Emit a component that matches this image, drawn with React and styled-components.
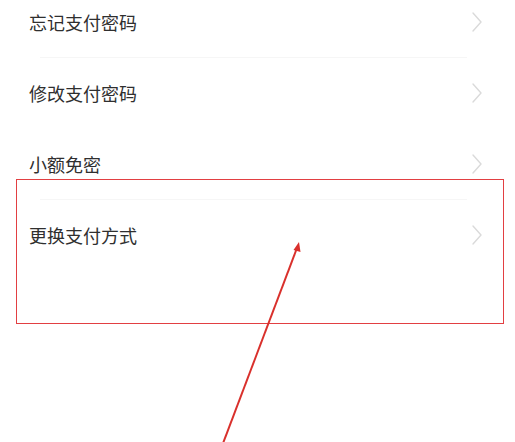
import React from "react";
import styled, { createGlobalStyle } from "styled-components";

const Global = createGlobalStyle`
  html, body { margin: 0; padding: 0; background: #ffffff; }
  body { font-family: "Noto Sans CJK SC", "Noto Sans", sans-serif; }
`;

const Page = styled.div`
  position: relative;
  width: 515px;
  height: 442px;
  overflow: hidden;
  background: #ffffff;
`;

const List = styled.ul`
  list-style: none;
  margin: -14px 0 0 0;
  padding: 0;
  display: flex;
  flex-direction: column;
`;

const Row = styled.li`
  position: relative;
  height: 71px;
  display: flex;
  align-items: center;
  justify-content: space-between;
  padding: 0 32px 0 29px;
  box-sizing: border-box;
  &::after {
    content: "";
    display: ${(p) => (p.$divider ? "block" : "none")};
    position: absolute;
    left: 40px;
    right: 48px;
    bottom: -1px;
    height: 1px;
    background: #f6f6f6;
  }
`;

const Label = styled.span`
  font-size: 18px;
  line-height: 24px;
  color: #2f2f2f;
`;

const Chevron = () => (
  <svg width="12" height="22" viewBox="0 0 12 22" fill="none">
    <path d="M2 2 L10 11 L2 20" stroke="#dadada" strokeWidth="1.4" strokeLinecap="round" strokeLinejoin="round" />
  </svg>
);

const Highlight = styled.div`
  position: absolute;
  left: 16px;
  top: 179px;
  width: 488px;
  height: 145px;
  box-sizing: border-box;
  border: 1.5px solid #e23f42;
  pointer-events: none;
`;

const ArrowLayer = styled.svg`
  position: absolute;
  left: 0;
  top: 0;
  pointer-events: none;
`;

const items = [
  { label: "忘记支付密码", divider: true },
  { label: "修改支付密码", divider: false },
  { label: "小额免密", divider: true },
  { label: "更换支付方式", divider: false },
];

export default function App() {
  return (
    <>
      <Global />
      <Page>
        <List>
          {items.map((it) => (
            <Row key={it.label} $divider={it.divider}>
              <Label>{it.label}</Label>
              <Chevron />
            </Row>
          ))}
        </List>
        <Highlight />
        <ArrowLayer width="515" height="442" viewBox="0 0 515 442">
          <line x1="222" y1="446" x2="297" y2="248" stroke="#d9302c" strokeWidth="2" />
          <polygon points="299,242 293.5,250 300.5,252" fill="#d9302c" />
        </ArrowLayer>
      </Page>
    </>
  );
}
